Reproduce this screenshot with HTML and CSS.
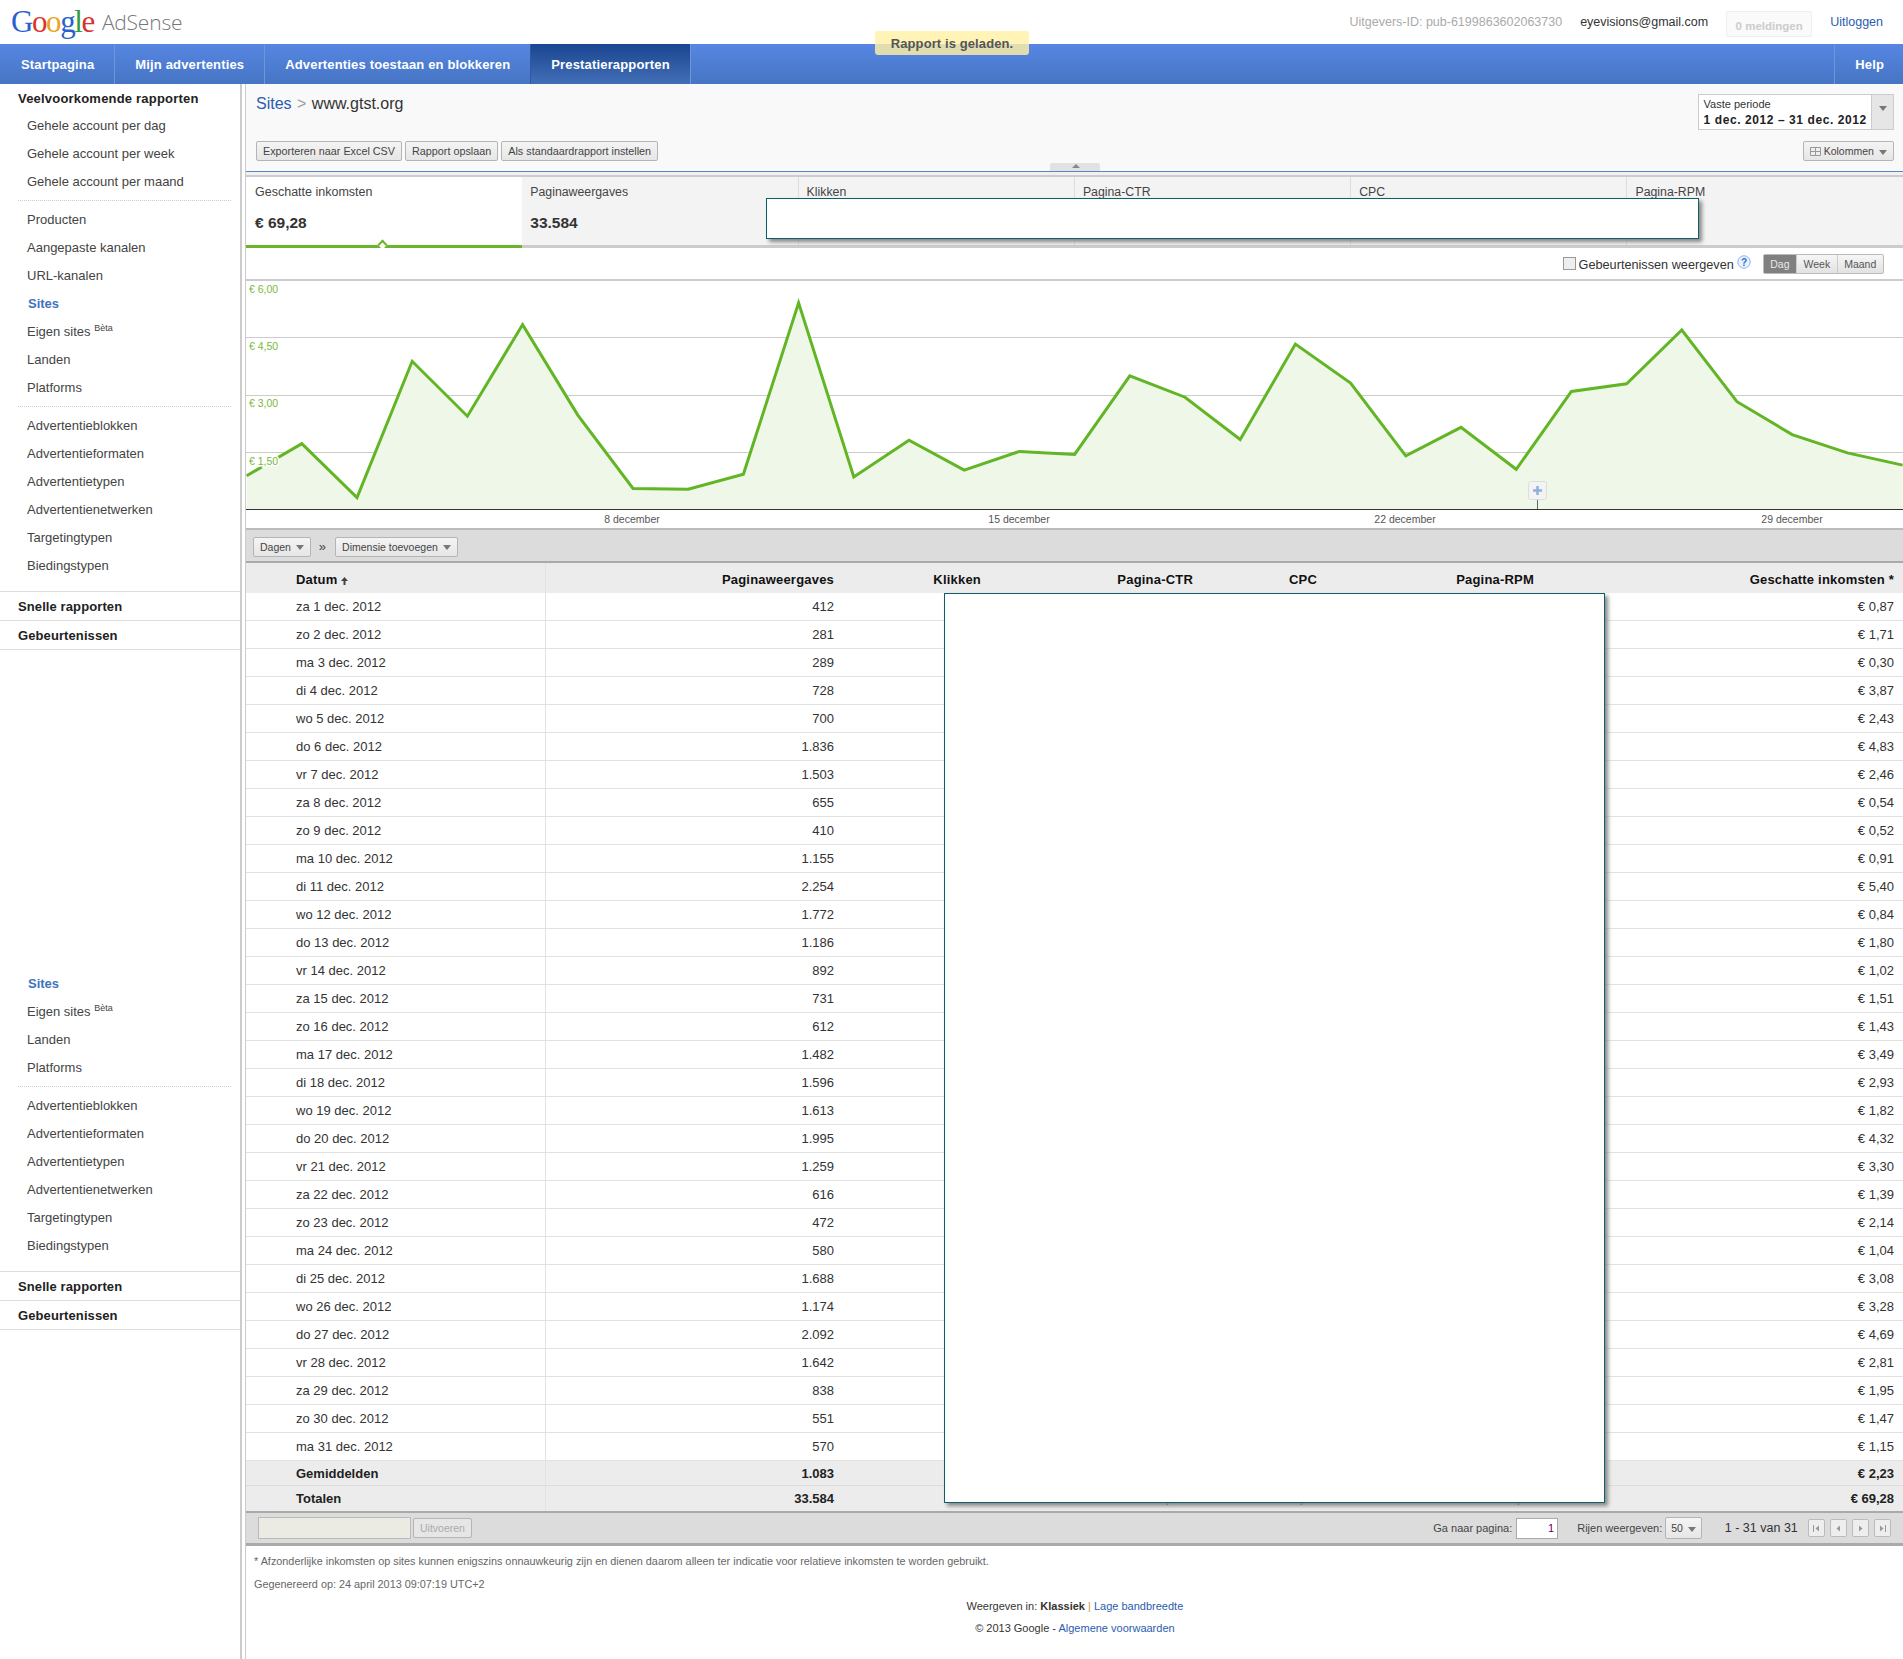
FILE: index.html
```html
<!DOCTYPE html>
<html lang="nl">
<head>
    <meta charset="UTF-8">
    <title>Google AdSense</title>
    <link rel="stylesheet" href="styles.css">
</head>
<body>
<div class="toast">Rapport is geladen.</div>

<header class="top">
    <div class="logo">
        <span class="google"><b class="c-blue">G</b><b class="c-red">o</b><b class="c-yellow">o</b><b class="c-blue">g</b><b class="c-green">l</b><b class="c-red">e</b></span>
        <span class="adsense">AdSense</span>
    </div>
    <div class="top-right">
        <span class="pub-id">Uitgevers-ID: pub-6199863602063730</span>
        <span class="email">eyevisions@gmail.com</span>
        <span class="alerts">0 meldingen</span>
        <a class="link" href="#">Uitloggen</a>
    </div>
</header>

<nav class="nav">
    <a href="#">Startpagina</a>
    <a href="#">Mijn advertenties</a>
    <a href="#">Advertenties toestaan en blokkeren</a>
    <a href="#" class="active">Prestatierapporten</a>
    <a href="#" class="help">Help</a>
</nav>

<div class="layout">
    <aside class="side">
        <div class="side-title">Veelvoorkomende rapporten</div>
        <ul class="side-group">
            <li>Gehele account per dag</li>
            <li>Gehele account per week</li>
            <li>Gehele account per maand</li>
        </ul>
        <ul class="side-group">
            <li>Producten</li>
            <li>Aangepaste kanalen</li>
            <li>URL-kanalen</li>
            <li class="current">Sites</li>
            <li>Eigen sites <sup>Bèta</sup></li>
            <li>Landen</li>
            <li>Platforms</li>
        </ul>
        <ul class="side-group last">
            <li>Advertentieblokken</li>
            <li>Advertentieformaten</li>
            <li>Advertentietypen</li>
            <li>Advertentienetwerken</li>
            <li>Targetingtypen</li>
            <li>Biedingstypen</li>
        </ul>
        <div class="side-head">Snelle rapporten</div>
        <div class="side-head">Gebeurtenissen</div>

        <ul class="side-group ghost">
            <li class="current">Sites</li>
            <li>Eigen sites <sup>Bèta</sup></li>
            <li>Landen</li>
            <li>Platforms</li>
        </ul>
        <ul class="side-group last">
            <li>Advertentieblokken</li>
            <li>Advertentieformaten</li>
            <li>Advertentietypen</li>
            <li>Advertentienetwerken</li>
            <li>Targetingtypen</li>
            <li>Biedingstypen</li>
        </ul>
        <div class="side-head">Snelle rapporten</div>
        <div class="side-head">Gebeurtenissen</div>
    </aside>

    <main class="main">
        <section class="head">
            <div class="head-row">
                <div class="crumb"><a class="link" href="#">Sites</a> <span class="gt">&gt;</span> www.gtst.org</div>
                <div class="period">
                    <div class="period-text">
                        <small>Vaste periode</small>
                        <strong>1 dec. 2012 – 31 dec. 2012</strong>
                    </div>
                    <div class="period-arrow"><i class="caret"></i></div>
                </div>
            </div>
            <div class="head-row tools">
                <div class="btns">
                    <button class="btn wide">Exporteren naar Excel CSV</button>
                    <button class="btn wide">Rapport opslaan</button>
                    <button class="btn wide">Als standaardrapport instellen</button>
                </div>
                <button class="btn">
                    <svg class="grid-icon" width="11" height="9" viewBox="0 0 11 9"><path d="M.5.5h10v8H.5zM5.5.5v8M.5 4.5h10" fill="#eee" stroke="#999"/></svg>
                    Kolommen <i class="caret"></i>
                </button>
            </div>
            <div class="collapse"><i class="caret up"></i></div>
        </section>
        <div class="strip"></div>

        <section class="tabs">
            <div class="tab active"><span>Geschatte inkomsten</span><b>€ 69,28</b></div>
            <div class="tab"><span>Paginaweergaves</span><b>33.584</b></div>
            <div class="tab"><span>Klikken</span></div>
            <div class="tab"><span>Pagina-CTR</span></div>
            <div class="tab"><span>CPC</span></div>
            <div class="tab"><span>Pagina-RPM</span></div>
        </section>

        <section class="chart-bar">
            <label class="events"><i class="check"></i>Gebeurtenissen weergeven</label>
            <svg class="help-icon" width="14" height="14" viewBox="0 0 14 14"><circle cx="7" cy="7" r="6.2" fill="#eaf2fd" stroke="#8db4ea"/><text x="7" y="11" text-anchor="middle" class="help-q">?</text></svg>
            <div class="toggle"><span class="on">Dag</span><span>Week</span><span>Maand</span></div>
        </section>

        <svg class="chart" width="1657" height="247" viewBox="246 281 1657 247">
            <path class="gridline" d="M246 337.500H1903M246 395.500H1903M246 452.500H1903"/>
            <polygon class="area" points="246.600,509 246.600,475.800 301.800,443.700 357,497.500 412.200,361.300 467.400,416.200 522.600,324.600 577.800,415.100 633,488.400 688.200,489.200 743.400,474.300 798.600,302.900 853.800,476.900 909,440.300 964.200,470.100 1019.400,451.400 1074.600,454.400 1129.800,375.800 1185,397.200 1240.200,439.500 1295.400,344.100 1350.600,383 1405.800,455.900 1461,427.300 1516.200,469.300 1571.400,391.400 1626.600,383.800 1681.800,330 1737,401.700 1792.200,434.600 1847.400,452.900 1902.600,465.100 1902.600,509"/>
            <polyline class="line" points="246.600,475.800 301.800,443.700 357,497.500 412.200,361.300 467.400,416.200 522.600,324.600 577.800,415.100 633,488.400 688.200,489.200 743.400,474.300 798.600,302.900 853.800,476.900 909,440.300 964.200,470.100 1019.400,451.400 1074.600,454.400 1129.800,375.800 1185,397.200 1240.200,439.500 1295.400,344.100 1350.600,383 1405.800,455.900 1461,427.300 1516.200,469.300 1571.400,391.400 1626.600,383.800 1681.800,330 1737,401.700 1792.200,434.600 1847.400,452.900 1902.600,465.100"/>
            <path class="baseline" d="M246 509.500H1903"/>
            <text class="y-label" x="249" y="293">€ 6,00</text>
            <text class="y-label" x="249" y="350">€ 4,50</text>
            <text class="y-label" x="249" y="407">€ 3,00</text>
            <text class="y-label halo" x="249" y="465">€ 1,50</text>
            <text class="y-label" x="249" y="465">€ 1,50</text>
            <text class="x-label" x="632" y="523">8 december</text>
            <text class="x-label" x="1019" y="523">15 december</text>
            <text class="x-label" x="1405" y="523">22 december</text>
            <text class="x-label" x="1792" y="523">29 december</text>
            <rect class="marker" x="1528.500" y="481.500" width="18" height="18" rx="2"/>
            <path class="marker-plus" d="M1537.500 486v9M1533 490.500h9"/>
            <path class="marker-stem" d="M1537.500 500v9"/>
        </svg>

        <section class="band">
            <button class="btn">Dagen <i class="caret"></i></button>
            <span class="chev">»</span>
            <button class="btn">Dimensie toevoegen <i class="caret"></i></button>
        </section>

        <table class="report">
            <colgroup>
                <col class="c-date"><col class="c-views"><col class="c-clicks"><col class="c-ctr"><col class="c-cpc"><col class="c-rpm"><col>
            </colgroup>
            <thead>
                <tr><th class="date">Datum <svg class="sort" width="7" height="8" viewBox="0 0 7 8"><path d="M3.500 0L7 4H4.500v4h-2V4H0z"/></svg></th><th>Paginaweergaves</th><th>Klikken</th><th>Pagina-CTR</th><th>CPC</th><th>Pagina-RPM</th><th>Geschatte inkomsten *</th></tr>
            </thead>
            <tbody>
                <tr><td class="date">za 1 dec. 2012</td><td>412</td><td colspan="4"></td><td>€ 0,87</td></tr>
                <tr><td class="date">zo 2 dec. 2012</td><td>281</td><td colspan="4"></td><td>€ 1,71</td></tr>
                <tr><td class="date">ma 3 dec. 2012</td><td>289</td><td colspan="4"></td><td>€ 0,30</td></tr>
                <tr><td class="date">di 4 dec. 2012</td><td>728</td><td colspan="4"></td><td>€ 3,87</td></tr>
                <tr><td class="date">wo 5 dec. 2012</td><td>700</td><td colspan="4"></td><td>€ 2,43</td></tr>
                <tr><td class="date">do 6 dec. 2012</td><td>1.836</td><td colspan="4"></td><td>€ 4,83</td></tr>
                <tr><td class="date">vr 7 dec. 2012</td><td>1.503</td><td colspan="4"></td><td>€ 2,46</td></tr>
                <tr><td class="date">za 8 dec. 2012</td><td>655</td><td colspan="4"></td><td>€ 0,54</td></tr>
                <tr><td class="date">zo 9 dec. 2012</td><td>410</td><td colspan="4"></td><td>€ 0,52</td></tr>
                <tr><td class="date">ma 10 dec. 2012</td><td>1.155</td><td colspan="4"></td><td>€ 0,91</td></tr>
                <tr><td class="date">di 11 dec. 2012</td><td>2.254</td><td colspan="4"></td><td>€ 5,40</td></tr>
                <tr><td class="date">wo 12 dec. 2012</td><td>1.772</td><td colspan="4"></td><td>€ 0,84</td></tr>
                <tr><td class="date">do 13 dec. 2012</td><td>1.186</td><td colspan="4"></td><td>€ 1,80</td></tr>
                <tr><td class="date">vr 14 dec. 2012</td><td>892</td><td colspan="4"></td><td>€ 1,02</td></tr>
                <tr><td class="date">za 15 dec. 2012</td><td>731</td><td colspan="4"></td><td>€ 1,51</td></tr>
                <tr><td class="date">zo 16 dec. 2012</td><td>612</td><td colspan="4"></td><td>€ 1,43</td></tr>
                <tr><td class="date">ma 17 dec. 2012</td><td>1.482</td><td colspan="4"></td><td>€ 3,49</td></tr>
                <tr><td class="date">di 18 dec. 2012</td><td>1.596</td><td colspan="4"></td><td>€ 2,93</td></tr>
                <tr><td class="date">wo 19 dec. 2012</td><td>1.613</td><td colspan="4"></td><td>€ 1,82</td></tr>
                <tr><td class="date">do 20 dec. 2012</td><td>1.995</td><td colspan="4"></td><td>€ 4,32</td></tr>
                <tr><td class="date">vr 21 dec. 2012</td><td>1.259</td><td colspan="4"></td><td>€ 3,30</td></tr>
                <tr><td class="date">za 22 dec. 2012</td><td>616</td><td colspan="4"></td><td>€ 1,39</td></tr>
                <tr><td class="date">zo 23 dec. 2012</td><td>472</td><td colspan="4"></td><td>€ 2,14</td></tr>
                <tr><td class="date">ma 24 dec. 2012</td><td>580</td><td colspan="4"></td><td>€ 1,04</td></tr>
                <tr><td class="date">di 25 dec. 2012</td><td>1.688</td><td colspan="4"></td><td>€ 3,08</td></tr>
                <tr><td class="date">wo 26 dec. 2012</td><td>1.174</td><td colspan="4"></td><td>€ 3,28</td></tr>
                <tr><td class="date">do 27 dec. 2012</td><td>2.092</td><td colspan="4"></td><td>€ 4,69</td></tr>
                <tr><td class="date">vr 28 dec. 2012</td><td>1.642</td><td colspan="4"></td><td>€ 2,81</td></tr>
                <tr><td class="date">za 29 dec. 2012</td><td>838</td><td colspan="4"></td><td>€ 1,95</td></tr>
                <tr><td class="date">zo 30 dec. 2012</td><td>551</td><td colspan="4"></td><td>€ 1,47</td></tr>
                <tr><td class="date">ma 31 dec. 2012</td><td>570</td><td colspan="4"></td><td>€ 1,15</td></tr>
            </tbody>
            <tfoot>
                <tr><td class="date">Gemiddelden</td><td>1.083</td><td colspan="4"></td><td>€ 2,23</td></tr>
                <tr><td class="date">Totalen</td><td>33.584</td><td></td><td class="tail-ctr">,</td><td class="tail">,</td><td class="tail">,</td><td>€ 69,28</td></tr>
            </tfoot>
        </table>

        <section class="pager">
            <div class="pager-left">
                <input class="search" type="text" disabled>
                <button class="btn off">Uitvoeren</button>
            </div>
            <div class="pager-right">
                <span>Ga naar pagina:</span>
                <input class="page-input" type="text" value="1">
                <span class="rows-label">Rijen weergeven:</span>
                <button class="btn small">50 <i class="caret"></i></button>
                <span class="count">1 - 31 van 31</span>
                <div class="steps">
                    <span class="step"><svg width="9" height="9" viewBox="0 0 9 9"><path d="M1.500 1v7" stroke="#999"/><path d="M7 1.500v6L3.500 4.500z" fill="#999"/></svg></span>
                    <span class="step"><svg width="9" height="9" viewBox="0 0 9 9"><path d="M6 1.500v6L2.500 4.500z" fill="#999"/></svg></span>
                    <span class="step"><svg width="9" height="9" viewBox="0 0 9 9"><path d="M3 1.500v6l3.500-3z" fill="#999"/></svg></span>
                    <span class="step"><svg width="9" height="9" viewBox="0 0 9 9"><path d="M2 1.500v6l3.500-3z" fill="#999"/><path d="M7.500 1v7" stroke="#999"/></svg></span>
                </div>
            </div>
        </section>

        <footer class="foot">
            <p class="note">* Afzonderlijke inkomsten op sites kunnen enigszins onnauwkeurig zijn en dienen daarom alleen ter indicatie voor relatieve inkomsten te worden gebruikt.</p>
            <p>Gegenereerd op: 24 april 2013 09:07:19 UTC+2</p>
            <p class="center dark">Weergeven in: <b>Klassiek</b> <span class="pipe">|</span> <a class="link" href="#">Lage bandbreedte</a></p>
            <p class="center dark">© 2013 Google - <a class="link" href="#">Algemene voorwaarden</a></p>
        </footer>

        <!-- witte vlakken over de verborgen cijfers -->
        <div class="blank blank-tabs"></div>
        <div class="blank blank-table"></div>
    </main>
</div>
</body>
</html>
```

FILE: styles.css
```css
body {
    margin: 0;
    font-family: "Liberation Sans", Arial, sans-serif;
    font-size: 12px;
    color: #333;
    background: #fff;
}

a {
    text-decoration: none;
}

.link {
    color: #2a5db0;
}

/* TOP */
.top {
    display: flex;
    justify-content: space-between;
    height: 44px;
}

.logo {
    display: flex;
    align-items: center;
    padding-left: 11px;
    gap: 8px;
}

.google {
    font-family: "Liberation Serif", serif;
    font-size: 31px;
    letter-spacing: -1.4px;
    line-height: 44px;
}

.google b {
    font-weight: normal;
}

.c-blue { color: #2a5fd0; }
.c-red { color: #d9342b; }
.c-yellow { color: #eaa51c; }
.c-green { color: #2f9e3f; }

.adsense {
    font-family: "Open Sans", sans-serif;
    font-weight: 300;
    font-size: 21px;
    color: #777;
    letter-spacing: -.2px;
}

.top-right {
    display: flex;
    align-items: flex-start;
    padding: 15px 20px 0 0;
    font-size: 12.500px;
    line-height: 14px;
}

.pub-id {
    color: #aaa;
    margin-right: 18px;
}

.email {
    margin-right: 18px;
    color: #333;
}

.alerts {
    width: 84px;
    height: 24px;
    margin: -4px 18px 0 0;
    border: 1px solid #eee;
    border-radius: 2px;
    background: #fafafa;
    color: #ccc;
    font-weight: bold;
    font-size: 11.500px;
    line-height: 29px;
    text-align: center;
}

/* NAV */
.nav {
    display: flex;
    height: 40px;
    background: linear-gradient(#5686e2, #4675c4);
}

.nav a {
    padding: 0 20px;
    border-right: 1px solid #7096d6;
    color: #fff;
    font-weight: bold;
    font-size: 13px;
    letter-spacing: .16px;
    line-height: 41px;
}

.nav a:first-child {
    padding-left: 21px;
}

.nav a.active {
    background: linear-gradient(#1a4590, #426fb8);
    border-left: 1px solid #2d5aa5;
    margin-left: -1px;
}

.nav a.help {
    margin-left: auto;
    padding: 0 19px 0 20px;
    border-right: 0;
    border-left: 1px solid #7096d6;
}

.toast {
    position: absolute;
    left: 875px;
    top: 31px;
    width: 154px;
    height: 24px;
    border-radius: 3px;
    background: rgba(255, 240, 165, .82);
    color: #555;
    font-weight: bold;
    font-size: 13px;
    letter-spacing: .1px;
    line-height: 25px;
    text-align: center;
}

/* LAYOUT */
.layout {
    display: flex;
    min-height: 1575px;
}

.side {
    width: 240px;
    border-right: 2px solid #ccc;
    flex: none;
    font-size: 13px;
}

.side-title {
    height: 28px;
    padding-left: 18px;
    color: #222;
    font-weight: bold;
    letter-spacing: .2px;
    line-height: 29px;
}

.side-group {
    list-style: none;
    margin: 0 9px 0 18px;
    padding: 0 0 4px;
    border-bottom: 1px dotted #ccc;
}

.side-group + .side-group {
    padding-top: 5px;
}

.side-group li {
    padding-left: 9px;
    line-height: 28px;
    color: #444;
}

.side-group sup {
    font-size: 9px;
    line-height: 0;
}

.side-group .current {
    padding-left: 10px;
    color: #3d74c0;
    font-weight: bold;
}

.side-group.last {
    margin: 0 0 0 18px;
    padding-bottom: 11px;
    border-bottom: 0;
}

.side-group.ghost {
    margin-top: 320px;
    padding-top: 0;
}

.side-head {
    padding-left: 18px;
    border-top: 1px solid #ddd;
    color: #222;
    font-weight: bold;
    letter-spacing: .1px;
    line-height: 29px;
    height: 28px;
}

.side-head + .side-head {
    border-bottom: 1px solid #ddd;
}

.main {
    position: relative;
    flex: 1;
    margin-left: 3px;
    border-left: 1px solid #ccc;
}

/* HEAD */
.head {
    position: relative;
    height: 77px;
    padding: 10px 10px 0;
    background: #f9f9f9;
    border-bottom: 1px solid #5a85c9;
}

.head-row {
    display: flex;
    justify-content: space-between;
    align-items: flex-start;
}

.crumb {
    padding-top: 1px;
    font-size: 16px;
    line-height: 18px;
    color: #333;
}

.gt {
    margin: 0 1px;
    color: #999;
}

.period {
    display: flex;
    height: 34px;
    border: 1px solid #ccc;
    background: #fff;
}

.period-text {
    padding: 2px 4px 0 5px;
    line-height: 14px;
}

.period-text small {
    display: block;
    font-size: 11px;
}

.period-text strong {
    display: block;
    margin-top: 2px;
    font-size: 12px;
    letter-spacing: .58px;
    font-weight: bold;
    color: #222;
}

.period-arrow {
    width: 21px;
    background: #e6e6e6;
    border-left: 1px solid #ccc;
    text-align: center;
    line-height: 26px;
}

.tools {
    margin-top: 11px;
}

.btns {
    display: flex;
    gap: 3px;
}

.btn {
    height: 20px;
    padding: 0 6px;
    border: 1px solid #b5b5b5;
    border-radius: 2px;
    background: linear-gradient(#f4f4f4, #e6e6e6);
    font-family: inherit;
    font-size: 10.500px;
    color: #444;
}

.btn.wide {
    font-size: 10.800px;
}

.btn.off {
    color: #aaa;
    background: #e6e6e6;
}

.btn.small {
    padding: 0 5px;
    height: 22px;
}

.caret {
    display: inline-block;
    width: 0;
    height: 0;
    margin-left: 2px;
    border: 4px solid transparent;
    border-top: 5px solid #777;
    border-bottom: 0;
    vertical-align: middle;
}

.caret.up {
    border-top: 0;
    border-bottom: 4px solid #888;
}

.grid-icon {
    vertical-align: -1px;
}

.collapse {
    position: absolute;
    left: 804px;
    bottom: 0;
    width: 50px;
    height: 8px;
    border-radius: 2px 2px 0 0;
    background: #e2e2e2;
    text-align: center;
    line-height: 4px;
}

.strip {
    height: 3px;
    background: #f0f0f0;
    border-bottom: 2px solid #ccc;
}

/* TABS */
.tabs {
    display: flex;
    height: 68px;
    border-bottom: 3px solid #ccc;
    background: #f3f3f3;
}

.tab {
    position: relative;
    width: 276.300px;
    padding: 8px 8px 0;
    box-sizing: border-box;
    border-right: 1px solid #ddd;
}

.tab span {
    display: block;
    font-size: 12.300px;
    line-height: 15px;
    color: #444;
}

.tab b {
    display: block;
    margin-top: 15px;
    font-size: 15.500px;
    line-height: 16px;
}

.tab.active {
    height: 71px;
    padding-left: 9px;
    background: #fff;
    border-right: 0;
    border-bottom: 3px solid #6ab52a;
}

.tab.active span {
    font-size: 12.500px;
}

.tab.active::after {
    content: "";
    position: absolute;
    left: 133px;
    bottom: -3px;
    width: 5px;
    height: 5px;
    background: #fff;
    border: solid #6ab52a;
    border-width: 2px 0 0 2px;
    transform: rotate(45deg);
}

/* CHART */
.chart-bar {
    display: flex;
    justify-content: flex-end;
    align-items: center;
    height: 33px;
    padding-right: 20px;
    border-bottom: 2px solid #ccc;
    box-sizing: border-box;
}

.events {
    display: flex;
    align-items: center;
    padding-top: 2px;
    font-size: 12.700px;
    color: #333;
}

.check {
    width: 11px;
    height: 11px;
    margin: -2px 3px 0 0;
    border: 1px solid #999;
    background: #eee;
}

.help-icon {
    margin: -4px 12px 0 3px;
}

.help-q {
    font-size: 10px;
    font-weight: bold;
    fill: #2a6fd0;
}

.toggle {
    display: flex;
    height: 20px;
    border: 1px solid #bbb;
    border-radius: 2px;
    box-sizing: border-box;
    font-size: 10.500px;
    line-height: 18px;
    color: #555;
    background: linear-gradient(#f6f6f6, #e2e2e2);
}

.toggle span {
    padding: 0 6.500px;
    border-left: 1px solid #ccc;
}

.toggle .on {
    border-left: 0;
    background: #808080;
    color: #e8e8e8;
}

.chart {
    display: block;
    height: 247px;
    border-bottom: 1px solid #bbb;
}

.gridline {
    stroke: #ccc;
    fill: none;
}

.area {
    fill: #eff7e8;
}

.line {
    fill: none;
    stroke: #62b524;
    stroke-width: 3px;
}

.baseline {
    stroke: #333;
}

.y-label {
    font-size: 10.500px;
    fill: #7ab93a;
}

.halo {
    stroke: #fff;
    stroke-width: 3px;
}

.x-label {
    font-size: 10.500px;
    fill: #555;
    text-anchor: middle;
}

.marker {
    fill: #f3f3f3;
    stroke: #ddd;
}

.marker-plus {
    stroke: #8fb0dc;
    stroke-width: 2.500px;
}

.marker-stem {
    stroke: #666;
}

/* TABLE */
.band {
    display: flex;
    align-items: center;
    height: 34px;
    padding: 2px 0 0 7px;
    background: #dcdcdc;
    border-top: 1px solid #bbb;
    border-bottom: 2px solid #aaa;
    box-sizing: border-box;
}

.chev {
    margin: 0 9px 0 8px;
    font-size: 13px;
    color: #444;
}

.report {
    width: 1657px;
    table-layout: fixed;
    border-collapse: collapse;
}

.c-date { width: 299px; }
.c-views { width: 298px; }
.c-clicks { width: 147px; }
.c-ctr { width: 212px; }
.c-cpc { width: 124px; }
.c-rpm { width: 217px; }

.report th,
.report td {
    padding: 0 9px;
    text-align: right;
    color: #333;
    font-size: 13px;
}

.report th {
    height: 27px;
    padding-top: 3px;
    background: #ececec;
    color: #111;
    letter-spacing: .2px;
}

.report td {
    height: 27px;
    border-bottom: 1px solid #e2e2e2;
}

.report .date {
    padding-left: 50px;
    text-align: left;
    border-right: 1px solid #e2e2e2;
}

.sort {
    fill: #444;
    vertical-align: -1px;
}

.report tfoot td {
    height: 24px;
    background: #ececec;
    color: #222;
    font-weight: bold;
    border-bottom: 1px solid #dcdcdc;
}

.report tfoot tr:last-child td {
    height: 25px;
    border-bottom: 0;
}

.report td.tail-ctr {
    padding-right: 33px;
}

.report td.tail {
    padding-right: 23px;
}

/* PAGER */
.pager {
    display: flex;
    justify-content: space-between;
    align-items: center;
    height: 30px;
    padding: 0 13px 0 12px;
    border-top: 2px solid #aaa;
    border-bottom: 3px solid #aaa;
    background: #dcdcdc;
    font-size: 11px;
    color: #444;
}

.pager-left,
.pager-right {
    display: flex;
    align-items: center;
}

.pager-left {
    gap: 2px;
}

.search {
    width: 149px;
    height: 18px;
    border: 1px solid #bbb;
    background: #ebebe4;
    padding: 1px;
}

.page-input {
    width: 34px;
    height: 17px;
    margin: 0 19px 0 4px;
    padding: 1px 3px;
    border: 1px solid #aaa;
    text-align: right;
    font-family: inherit;
    font-size: 11px;
    color: #606;
}

.rows-label {
    margin-right: 3px;
}

.count {
    margin: 0 10px 0 23px;
    font-size: 12.500px;
    color: #333;
}

.steps {
    display: flex;
    gap: 5px;
}

.step {
    display: flex;
    align-items: center;
    justify-content: center;
    width: 15px;
    height: 16px;
    border: 1px solid #bbb;
    border-radius: 2px;
    background: #eee;
}

/* FOOT */
.foot {
    padding: 9px 8px 0;
    font-size: 10.850px;
    color: #666;
}

.foot p {
    margin: 0 0 9px;
    line-height: 13px;
}

.foot .note {
    margin-bottom: 10px;
}

.foot .center {
    font-size: 11px;
    text-align: center;
}

.foot .dark {
    color: #333;
}

.pipe {
    color: #d08a3a;
}

/* OVERLAY */
.blank {
    position: absolute;
    box-sizing: border-box;
    background: #fff;
    border: 1px solid #0c5f6b;
    box-shadow: 3px 3px 4px #888;
}

.blank-tabs {
    left: 520px;
    top: 114px;
    width: 933px;
    height: 41px;
}

.blank-table {
    left: 698px;
    top: 509px;
    width: 661px;
    height: 910px;
}
```
